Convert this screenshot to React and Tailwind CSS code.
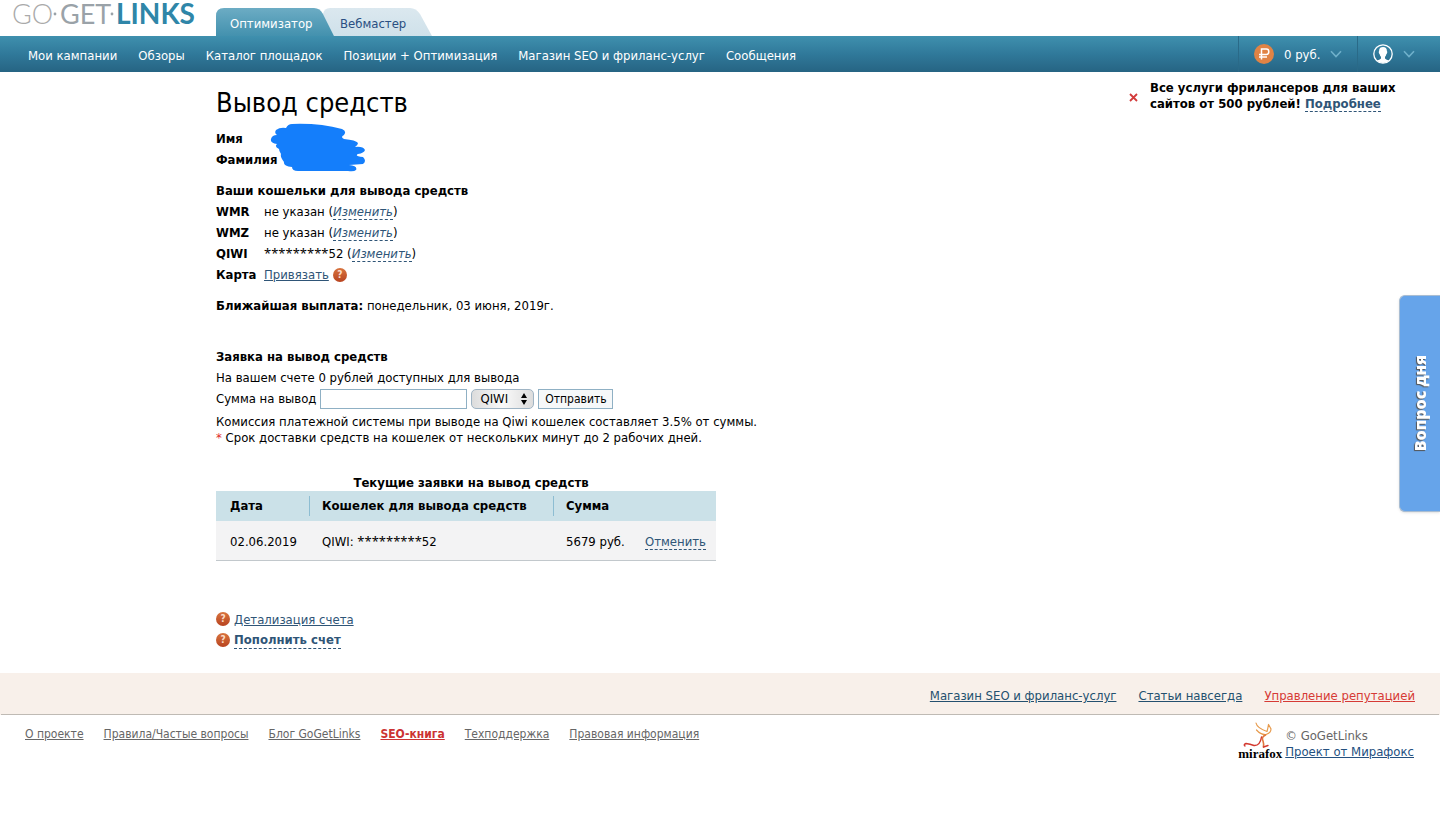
import React from "react";

const navItems = [
  "Мои кампании",
  "Обзоры",
  "Каталог площадок",
  "Позиции + Оптимизация",
  "Магазин SEO и фриланс-услуг",
  "Сообщения",
];

const wallets = [
  { name: "WMR", value: "не указан" },
  { name: "WMZ", value: "не указан" },
  { name: "QIWI", mask: "*********", value: "52" },
];

const bottomLinks = [
  { label: "О проекте" },
  { label: "Правила/Частые вопросы" },
  { label: "Блог GoGetLinks" },
  { label: "SEO-книга", accent: true },
  { label: "Техподдержка" },
  { label: "Правовая информация" },
];

function HelpBadge() {
  return (
    <span className="inline-flex size-3.5 shrink-0 items-center justify-center rounded-full bg-linear-to-b from-[#d8743f] to-[#b8431f] text-[10px] leading-none font-bold text-[#fbdcc8]">
      ?
    </span>
  );
}

function Mask({ children }) {
  return <span className="font-['Noto_Sans',sans-serif] leading-none">{children}</span>;
}

function Chevron() {
  return (
    <svg className="h-2 w-3" viewBox="0 0 12 8" fill="none" stroke="#6fb0ca" strokeWidth="1.6">
      <path d="M1 1.2 6 6.6 11 1.2" />
    </svg>
  );
}

function Logo() {
  return (
    <svg className="h-9 w-[216px] font-['Lato',sans-serif] text-[27px]" viewBox="0 0 216 36">
      <text x="12" y="24" fill="#aaaaaa" className="font-light">GO</text>
      <text x="60" y="24" fill="#9aa2a8">GET</text>
      <text x="116" y="24" fill="#2f86a8" className="text-[28px] font-bold">LINKS</text>
      <circle cx="55" cy="14" r="1.4" fill="#9aa2a8" />
      <circle cx="112" cy="14" r="1.4" fill="#9aa2a8" />
    </svg>
  );
}

function Tabs() {
  return (
    <div className="flex self-end">
      <a href="#optimizer" className="relative z-10 flex h-7 w-[118px] items-center pt-1 pl-3.5 text-white">
        <svg className="absolute inset-0 -z-10 h-7 w-[118px]" viewBox="0 0 118 28">
          <defs>
            <linearGradient id="tabActive" x1="0" y1="0" x2="0" y2="1">
              <stop offset="0" stopColor="#6cacc4" />
              <stop offset="1" stopColor="#4391ae" />
            </linearGradient>
          </defs>
          <path d="M0 28V8Q0 0 8 0H98Q104 0 107 6L118 28Z" fill="url(#tabActive)" />
        </svg>
        Оптимизатор
      </a>
      <a href="#webmaster" className="relative -ml-3 flex h-7 w-[110px] items-center pt-1 pl-[18px] text-[#2a4f82]">
        <svg className="absolute inset-0 -z-10 h-7 w-[110px]" viewBox="0 0 110 28">
          <defs>
            <linearGradient id="tabIdle" x1="0" y1="0" x2="0" y2="1">
              <stop offset="0" stopColor="#dbe8ef" />
              <stop offset="1" stopColor="#cfe1ea" />
            </linearGradient>
          </defs>
          <path d="M12 28 1 6Q2 0 8 0H88Q94 0 98 6L110 28Z" fill="url(#tabIdle)" />
        </svg>
        Вебмастер
      </a>
    </div>
  );
}

function Header() {
  return (
    <header>
      <div className="relative z-0 flex h-9">
        <a href="#home">
          <Logo />
        </a>
        <Tabs />
      </div>
      <div className="flex h-9 justify-between bg-linear-to-b from-[#3f90ae] via-[#30799a] to-[#266483] text-white">
        <nav className="flex items-center gap-[21px] pt-1 pl-7">
          {navItems.map((item) => (
            <a key={item} href="#nav" className="whitespace-nowrap">
              {item}
            </a>
          ))}
        </nav>
        <div className="flex">
          <button type="button" className="flex w-[119px] items-center border-l border-[#2a6a88] pl-[15px]">
            <svg className="size-5" viewBox="0 0 20 20">
              <circle cx="10" cy="10" r="10" fill="#e08345" />
              <g fill="none" stroke="#fff" strokeWidth="1.5">
                <path d="M7.5 15.5V5H12.4Q14.8 5 14.8 7.7T12.4 10.6H5M5 13H13" />
              </g>
            </svg>
            <span className="w-14 pt-0.5 pl-2.5 text-left whitespace-nowrap">0 руб.</span>
            <Chevron />
          </button>
          <button type="button" aria-label="Профиль" className="flex w-[83px] items-center gap-2.5 border-l border-[#2a6a88] pl-[15px]">
            <svg className="size-5" viewBox="0 0 20 20">
              <defs>
                <clipPath id="face">
                  <circle cx="10" cy="10" r="9" />
                </clipPath>
              </defs>
              <circle cx="10" cy="10" r="9.2" fill="none" stroke="#fff" strokeWidth="1.3" />
              <path
                clipPath="url(#face)"
                fill="#fff"
                d="M10 3C12.8 3 14 4.8 13.9 7.2Q14.6 7.6 14 9.2 13.6 10 13.2 10.4 12.9 12 12 12.8V14.4Q12.6 15.4 15.8 16.4V20H4.2V16.4Q7.4 15.4 8 14.4V12.8Q7.1 12 6.8 10.4 6.4 10 6 9.2 5.4 7.6 6.1 7.2 6 4.8 7.2 3.8 8.4 3 10 3Z"
              />
            </svg>
            <Chevron />
          </button>
        </div>
      </div>
    </header>
  );
}

function Scribble() {
  return (
    <svg className="absolute -top-[5px] left-[54px] h-[50px] w-24" viewBox="0 0 96 50">
      <path
        fill="#147efb"
        d="M22 1Q50 0 72 6 77 8 74 12 70 14 74 16 86 17 88 20 88 22 85 24 93 23 95 27 94 30 88 31 84 33 93 34 97 38 93 41L79 42Q88 43 86 47 84 49 78 48H28Q22 48 22 44 13 43 14 39 10 34 11 31 9 28 9 26 4 24 7 21 0 20 1 16 2 12 7 12 4 10 6 7 10 4 16 5 18 1 22 1Z"
      />
    </svg>
  );
}

function WithdrawForm() {
  return (
    <form className="mt-[30px]" onSubmit={(e) => e.preventDefault()}>
      <h2 className="leading-[21px] font-bold">Заявка на вывод средств</h2>
      <p className="leading-[21px]">На вашем счете 0 рублей доступных для вывода</p>
      <div className="flex h-[21px] items-center gap-1">
        <label htmlFor="amount">Сумма на вывод</label>
        <input id="amount" type="text" className="h-5 w-[147px] border border-[#8fb0c4] bg-white px-1" />
        <div className="relative">
          <select
            aria-label="Кошелек"
            className="block h-5 w-[63px] appearance-none rounded-[5px] border border-[#9fb4c4] bg-linear-to-r from-[#dcdcdc] via-[#fafafa] to-[#dcdcdc] pl-2 leading-4"
          >
            <option>QIWI</option>
          </select>
          <svg className="pointer-events-none absolute top-1 right-1.5 h-3 w-2" viewBox="0 0 8 12">
            <path d="M4 0 7 5H1ZM4 12 1 7H7Z" />
          </svg>
        </div>
        <button type="submit" className="flex h-5 w-[75px] items-center justify-center border border-[#8fb0c4] bg-[#f6f8f9] text-[12px]">
          Отправить
        </button>
      </div>
      <p className="mt-[5px] leading-4">
        Комиссия платежной системы при выводе на Qiwi кошелек составляет 3.5% от суммы.
        <br />
        <span className="text-[#e02b2b]">*</span> Срок доставки средств на кошелек от нескольких минут до 2 рабочих дней.
      </p>
    </form>
  );
}

function RequestsTable() {
  return (
    <table className="mt-[29px] w-[500px] table-fixed border-collapse text-left">
      <caption className="pl-2.5 leading-4 font-bold">Текущие заявки на вывод средств</caption>
      <colgroup>
        <col className="w-[93px]" />
        <col className="w-[244px]" />
        <col className="w-[79px]" />
        <col />
      </colgroup>
      <thead>
        <tr className="h-[30px] bg-[#cbe1e8]">
          <th className="py-1 pl-3.5">Дата</th>
          <th className="py-1">
            <span className="block border-l border-[#8dbdd2] pl-3">Кошелек для вывода средств</span>
          </th>
          <th className="py-1">
            <span className="block border-l border-[#8dbdd2] pl-3">Сумма</span>
          </th>
          <th />
        </tr>
      </thead>
      <tbody>
        <tr className="h-[39px] border-b border-[#c2c8cc] bg-[#f3f3f4]">
          <td className="pt-0.5 pl-3.5">02.06.2019</td>
          <td className="pt-0.5 pl-[13px]">
            QIWI: <Mask>*********</Mask>52
          </td>
          <td className="pt-0.5 pl-[13px] whitespace-nowrap">5679 руб.</td>
          <td className="pt-0.5 pl-[13px]">
            <a href="#cancel" className="border-b border-dashed border-[#2f5577] text-[#2f5577]">
              Отменить
            </a>
          </td>
        </tr>
      </tbody>
    </table>
  );
}

function Footer() {
  return (
    <footer>
      <div className="mx-px flex h-[42px] items-center justify-end gap-[22px] border-b border-[#bfbab4] bg-[#f8f0ea] pt-1.5 pr-6 text-[#24506f] shadow-[-1px_0_#f8f0ea,1px_0_#f8f0ea]">
        <a href="#shop" className="underline">Магазин SEO и фриланс-услуг</a>
        <a href="#articles" className="underline">Статьи навсегда</a>
        <a href="#reputation" className="text-[#d63a35] underline">Управление репутацией</a>
      </div>
      <div className="flex justify-between pr-[26px] pl-[25px]">
        <nav className="flex gap-5 pt-[11px] text-[12px] leading-4 text-[#666666]">
          {bottomLinks.map((link) => (
            <a
              key={link.label}
              href="#footer"
              className={link.accent ? "font-bold text-[#cc3333] underline" : "underline"}
            >
              {link.label}
            </a>
          ))}
        </nav>
        <div className="flex gap-0.5 pt-[7px]">
          <a href="#mirafox" className="flex w-[46px] flex-col items-center">
            <svg className="h-[26px] w-11" viewBox="0 0 44 26" fill="none" strokeLinecap="round">
              <path d="M18 1Q19 6 29 9.5M30.5 2.500Q30 6 29 9.5M18.5 8Q23 13 28 12.5 33 11 33 7 32 5 30.5 2.5" stroke="#e79a4c" strokeWidth="1.2" />
              <path d="M27.5 13Q23 15 25 19 26 22 25.5 25" stroke="#e0763c" strokeWidth="1.6" />
              <path d="M7 24Q5 23 8 21.5 12 22 16 23.5 22 24 23.5 15M25.5 25 30 23.5" stroke="#d3392f" strokeWidth="1.4" />
            </svg>
            <span className="-mt-0.5 font-['Liberation_Serif',serif] text-[13px] leading-4 font-bold text-black">mirafox</span>
          </a>
          <p className="pt-[6px] leading-4 text-[#666666]">
            © GoGetLinks
            <br />
            <a href="#project" className="text-[#24507f] underline">Проект от Мирафокс</a>
          </p>
        </div>
      </div>
    </footer>
  );
}

export default function App() {
  return (
    <div className="min-h-screen bg-white font-['DejaVu_Sans_Condensed','DejaVu_Sans',sans-serif] text-[13px] text-black">
      <Header />
      <div className="flex justify-between">
        <main className="pb-[22px] pl-[216px]">
          <h1 className="mt-3 text-[27px] leading-[38px]">Вывод средств</h1>
          <div className="relative mt-[6px] leading-[21px] font-bold">
            <p>Имя</p>
            <p>Фамилия</p>
            <Scribble />
          </div>
          <section className="mt-2.5 leading-[21px]">
            <h2 className="font-bold">Ваши кошельки для вывода средств</h2>
            {wallets.map((w) => (
              <p key={w.name} className="flex">
                <b className="w-12">{w.name}</b>
                <span>
                  {w.mask && <Mask>{w.mask}</Mask>}
                  {w.value} (
                  <a href="#edit" className="border-b border-dashed border-[#2f5577] text-[#2f5577] italic">
                    Изменить
                  </a>
                  )
                </span>
              </p>
            ))}
            <p className="flex items-center">
              <b className="w-12">Карта</b>
              <a href="#card" className="mr-1 text-[#2f5577] underline">Привязать</a>
              <HelpBadge />
            </p>
          </section>
          <p className="mt-2.5 leading-[21px]">
            <b>Ближайшая выплата:</b> понедельник, 03 июня, 2019г.
          </p>
          <WithdrawForm />
          <RequestsTable />
          <div className="mt-12 leading-[21px] text-[#2f5577]">
            <p className="flex h-[21px] items-center gap-1">
              <HelpBadge />
              <a href="#details" className="underline">Детализация счета</a>
            </p>
            <p className="flex h-[21px] items-center gap-1">
              <HelpBadge />
              <a href="#topup" className="border-b border-dashed border-[#2f5577] leading-4 font-bold">
                Пополнить счет
              </a>
            </p>
          </div>
        </main>
        <aside className="flex w-[312px] items-start gap-[11px] pt-2">
          <button type="button" aria-label="Закрыть" className="mt-3 flex size-[11px] items-center justify-center">
            <svg className="size-[9px]" viewBox="0 0 9 9" stroke="#d33b3b" strokeWidth="1.8">
              <path d="M1 1 8 8M8 1 1 8" />
            </svg>
          </button>
          <p className="w-[260px] leading-4 font-bold">
            Все услуги фрилансеров для ваших
            <br />
            сайтов от 500 рублей!{" "}
            <a href="#more" className="border-b border-dashed border-[#2f5577] text-[#2f5577]">Подробнее</a>
          </p>
        </aside>
      </div>
      <Footer />
      <button
        type="button"
        className="fixed top-[295px] right-0 flex h-[217px] w-[41px] items-center justify-center rounded-l-md border border-r-0 border-[#a9bdd2] bg-[#66a4ea] font-['Open_Sans',sans-serif] text-[16px] font-extrabold text-white shadow"
      >
        <span className="rotate-180 [text-shadow:-1px_-1px_1px_#555] [writing-mode:vertical-rl]">Вопрос дня</span>
      </button>
    </div>
  );
}
